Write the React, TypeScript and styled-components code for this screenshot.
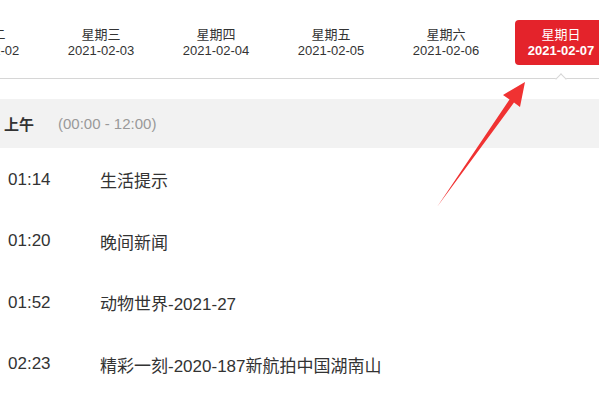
import React from "react";
import styled, { createGlobalStyle } from "styled-components";

const GlobalStyle = createGlobalStyle`
  html, body {
    margin: 0;
    padding: 0;
    background: #fff;
    overflow: hidden;
  }
  body {
    font-family: "Liberation Sans", "Noto Sans CJK SC", sans-serif;
    color: #333;
  }
`;

const Page = styled.div`
  position: relative;
  width: 599px;
  height: 400px;
  overflow: hidden;
`;

const Header = styled.div`
  height: 78px;
  border-bottom: 1px solid #d6d6d6;
  position: relative;
  z-index: 1;
`;

const TabRow = styled.div`
  display: flex;
  gap: 23px;
  margin-left: -60px;
  padding-top: 20px;
`;

const Tab = styled.div<{ $active?: boolean }>`
  position: relative;
  flex: 0 0 92px;
  height: 45px;
  display: flex;
  flex-direction: column;
  align-items: center;
  justify-content: center;
  border-radius: 4px;
  font-size: 13px;
  line-height: 16px;
  white-space: nowrap;
  background: ${(p) => (p.$active ? "#e4232b" : "transparent")};
  color: ${(p) => (p.$active ? "#fff" : "#333")};

  ${(p) =>
    p.$active &&
    `
    &::after {
      content: "";
      position: absolute;
      left: 42px;
      top: 54.5px;
      width: 8px;
      height: 8px;
      background: #fff;
      border-left: 1px solid #d6d6d6;
      border-top: 1px solid #d6d6d6;
      box-sizing: border-box;
      transform: rotate(45deg);
    }
  `}
`;

const DateText = styled.span<{ $active?: boolean }>`
  font-weight: ${(p) => (p.$active ? 700 : 400)};
`;

const SectionBar = styled.div`
  margin-top: 20px;
  height: 49px;
  background: #f2f2f2;
  display: flex;
  align-items: center;
  padding-left: 4px;
  font-size: 15px;
`;

const SectionName = styled.span`
  font-weight: 700;
  color: #333;
  width: 54px;
`;

const SectionRange = styled.span`
  color: #999;
`;

const List = styled.div`
  padding-top: 1px;
`;

const Row = styled.div`
  height: 61.5px;
  display: flex;
  align-items: center;
  font-size: 17px;
  color: #333;
`;

const Time = styled.span`
  width: 92px;
  padding-left: 8px;
`;

const Title = styled.span`
  white-space: nowrap;
`;

const Annotation = styled.svg`
  position: absolute;
  left: 0;
  top: 0;
  z-index: 2;
  pointer-events: none;
`;

const days = [
  { day: "星期二", date: "2021-02-02" },
  { day: "星期三", date: "2021-02-03" },
  { day: "星期四", date: "2021-02-04" },
  { day: "星期五", date: "2021-02-05" },
  { day: "星期六", date: "2021-02-06" },
  { day: "星期日", date: "2021-02-07", active: true },
];

const programs = [
  { time: "01:14", title: "生活提示" },
  { time: "01:20", title: "晚间新闻" },
  { time: "01:52", title: "动物世界-2021-27" },
  { time: "02:23", title: "精彩一刻-2020-187新航拍中国湖南山" },
];

export default function App() {
  return (
    <Page>
      <GlobalStyle />
      <Header>
        <TabRow>
          {days.map((d) => (
            <Tab key={d.date} $active={d.active}>
              <span>{d.day}</span>
              <DateText $active={d.active}>{d.date}</DateText>
            </Tab>
          ))}
        </TabRow>
      </Header>
      <SectionBar>
        <SectionName>上午</SectionName>
        <SectionRange>(00:00 - 12:00)</SectionRange>
      </SectionBar>
      <List>
        {programs.map((p) => (
          <Row key={p.time}>
            <Time>{p.time}</Time>
            <Title>{p.title}</Title>
          </Row>
        ))}
      </List>
      <Annotation width="599" height="400" viewBox="0 0 599 400">
        <polygon
          points="437,207 509.5,99.5 503,95 525,82 520,107 514,102.5"
          fill="#f03232"
        />
      </Annotation>
    </Page>
  );
}
